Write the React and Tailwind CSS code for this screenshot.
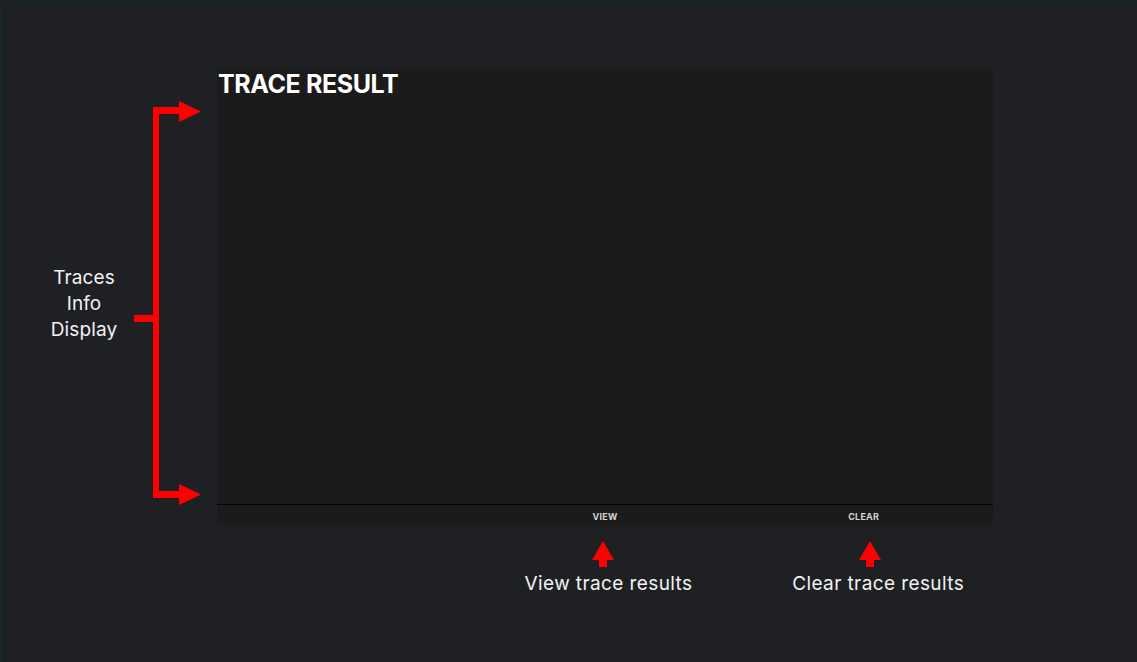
import React from "react";

function Bracket() {
  return (
    <svg width="67" height="405" viewBox="0 0 67 405" className="shrink-0">
      <g fill="#ff0000">
        <rect x="19" y="6" width="6" height="391" />
        <rect x="19" y="6" width="28" height="7" />
        <polygon points="45,0 67,10.5 45,21" />
        <rect x="19" y="390" width="28" height="7" />
        <polygon points="45,383 67,393.5 45,404" />
        <rect x="0" y="214" width="20" height="7" />
      </g>
    </svg>
  );
}

function UpArrow({ className }) {
  return (
    <svg className={className} width="22" height="26" viewBox="0 0 22 26">
      <polygon points="11,0 22,19 15,19 15,26 7,26 7,19 0,19" fill="#ff0000" />
    </svg>
  );
}

export default function App() {
  return (
    <div
      className="w-[1137px] h-[662px] bg-[#1f2024] border-l border-t border-[#0f2b38] overflow-hidden flex flex-col"
      style={{ fontFamily: "Inter, 'Noto Sans', sans-serif" }}
    >
      <div className="flex pt-[68px]">
        {/* left annotation */}
        <div className="w-[216px] pl-[33px] pt-[32px] pb-[20px] flex items-center">
          <div className="w-[100px] text-center text-[19px] leading-[26px] text-[#f2f2f2] tracking-[0.1px]">
            <div>Traces</div>
            <div>Info</div>
            <div>Display</div>
          </div>
          <Bracket />
        </div>

        {/* panel */}
        <div className="w-[776px] h-[456px] flex flex-col bg-[#1b1b1b]">
          <div className="flex-1 pl-[1px]">
            <h1 className="text-[25px] leading-[30px] font-bold text-white tracking-[-0.4px]">
              TRACE RESULT
            </h1>
          </div>
          <div className="h-[21px] border-t border-[#050505] grid grid-cols-3 text-[9px] font-bold text-[#d4d4d4] tracking-[0.2px]">
            <div />
            <div className="flex items-center justify-center pt-[3px]">VIEW</div>
            <div className="flex items-center justify-center pt-[3px]">CLEAR</div>
          </div>
        </div>
      </div>

      {/* bottom annotations */}
      <div className="pl-[216px]">
        <div className="w-[776px] grid grid-cols-3 pt-[15px] text-[19px] leading-[26px] text-[#f2f2f2] tracking-[0.4px]">
          <div />
          <div className="flex flex-col items-center">
            <UpArrow className="mr-[3px]" />
            <div className="mt-[4px] ml-[7px] whitespace-nowrap">View trace results</div>
          </div>
          <div className="flex flex-col items-center">
            <UpArrow className="ml-[13px]" />
            <div className="mt-[4px] ml-[29px] whitespace-nowrap">Clear trace results</div>
          </div>
        </div>
      </div>
    </div>
  );
}
